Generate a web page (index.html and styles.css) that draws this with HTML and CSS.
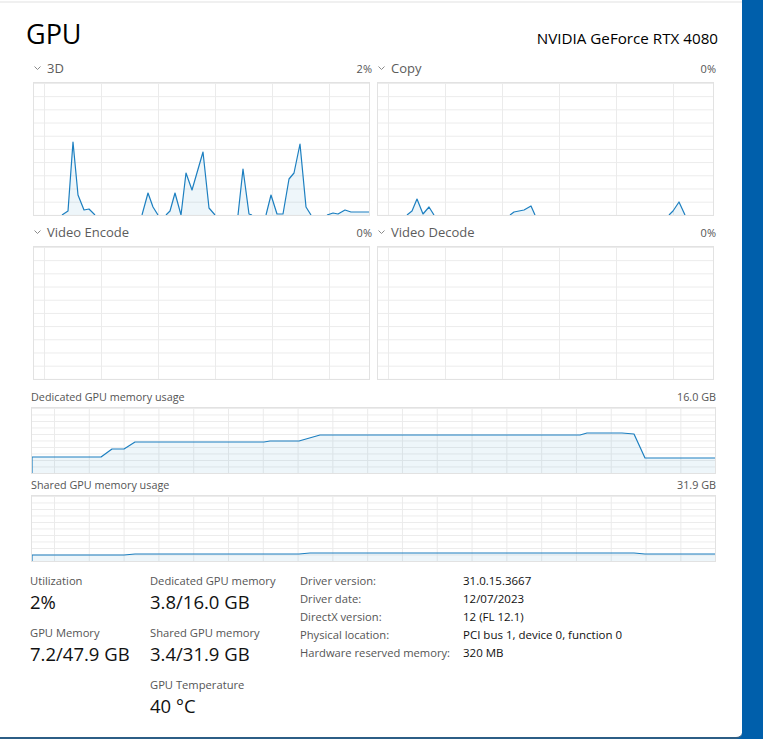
FILE: index.html
```html
<!DOCTYPE html>
<html lang="en">
<head>
    <meta charset="UTF-8">
    <meta name="viewport" content="width=device-width, initial-scale=1.0">
    <title>Task Manager - GPU</title>
    <link rel="stylesheet" href="styles.css">
</head>
<body>
    <div class="panel">
        <header class="head">
            <h1>GPU</h1>
            <div class="model">NVIDIA GeForce RTX 4080</div>
        </header>

        <div class="engines">
            <section class="engine">
                <div class="engine-head">
                    <span class="name"><svg class="chev" viewBox="0 0 7 4"><polyline points="0.5,0.5 3.5,3.5 6.5,0.5"/></svg>3D</span>
                    <span class="pct">2%</span>
                </div>
                <div class="graph">
                    <svg viewBox="0 0 335 132" preserveAspectRatio="none">
                        <polygon class="area" points="28,132 34,128 39,59 44,112 50,127 55,126 61,132 108,132 114,110 119,124 124,132 132,132 136,128 141,110 147,132 152,90 158,107 169,69 175,125 181,132 204,132 209,86 215,131 218,132 232,132 237,112 243,131 249,131 255,96 260,90 266,61 272,124 277,132 293,132 299,130 304,131 311,127 317,129 335,129 335,132"/>
                        <polyline class="line" points="28,132 34,128 39,59 44,112 50,127 55,126 61,132"/>
                        <polyline class="line" points="108,132 114,110 119,124 124,132"/>
                        <polyline class="line" points="132,132 136,128 141,110 147,132 152,90 158,107 169,69 175,125 181,132"/>
                        <polyline class="line" points="204,132 209,86 215,131 218,132"/>
                        <polyline class="line" points="232,132 237,112 243,131 249,131 255,96 260,90 266,61 272,124 277,132"/>
                        <polyline class="line" points="293,132 299,130 304,131 311,127 317,129 335,129"/>
                    </svg>
                </div>
            </section>
            <section class="engine">
                <div class="engine-head">
                    <span class="name"><svg class="chev" viewBox="0 0 7 4"><polyline points="0.5,0.5 3.5,3.5 6.5,0.5"/></svg>Copy</span>
                    <span class="pct">0%</span>
                </div>
                <div class="graph">
                    <svg viewBox="0 0 335 132" preserveAspectRatio="none">
                        <polygon class="area" points="29,132 34,128 39,116 45,131 51,124 56,132"/>
                        <polygon class="area" points="132,132 136,129 146,127 153,123 157,132"/>
                        <polygon class="area" points="291,132 295,128 301,119 307,132"/>
                        <polyline class="line" points="29,132 34,128 39,116 45,131 51,124 56,132"/>
                        <polyline class="line" points="132,132 136,129 146,127 153,123 157,132"/>
                        <polyline class="line" points="291,132 295,128 301,119 307,132"/>
                    </svg>
                </div>
            </section>
            <section class="engine">
                <div class="engine-head">
                    <span class="name"><svg class="chev" viewBox="0 0 7 4"><polyline points="0.5,0.5 3.5,3.5 6.5,0.5"/></svg>Video Encode</span>
                    <span class="pct">0%</span>
                </div>
                <div class="graph"></div>
            </section>
            <section class="engine">
                <div class="engine-head">
                    <span class="name"><svg class="chev" viewBox="0 0 7 4"><polyline points="0.5,0.5 3.5,3.5 6.5,0.5"/></svg>Video Decode</span>
                    <span class="pct">0%</span>
                </div>
                <div class="graph"></div>
            </section>
        </div>

        <section class="mem">
            <div class="mem-head">
                <span>Dedicated GPU memory usage</span>
                <span>16.0 GB</span>
            </div>
            <div class="graph mem-graph">
                <svg viewBox="0 0 683 65" preserveAspectRatio="none">
                    <polygon class="area" points="0,65 0,49 69,49 80,41 92,41 103,34 232,34 238,33 267,33 288,27 312,27 548,27 555,25 590,25 602,26 613,50 683,50 683,65"/>
                    <polyline class="line" points="0,65 0,49 69,49 80,41 92,41 103,34 232,34 238,33 267,33 288,27 312,27 548,27 555,25 590,25 602,26 613,50 683,50"/>
                </svg>
            </div>
        </section>

        <section class="mem shared">
            <div class="mem-head">
                <span>Shared GPU memory usage</span>
                <span>31.9 GB</span>
            </div>
            <div class="graph mem-graph">
                <svg viewBox="0 0 683 65" preserveAspectRatio="none">
                    <polygon class="area" points="0,65 0,59 92,59 103,58 267,58 278,57 602,57 613,58 683,58 683,65"/>
                    <polyline class="line" points="0,65 0,59 92,59 103,58 267,58 278,57 602,57 613,58 683,58"/>
                </svg>
            </div>
        </section>

        <div class="stats">
            <div class="col col-1">
                <div class="stat">
                    <div class="label">Utilization</div>
                    <div class="value">2%</div>
                </div>
                <div class="stat">
                    <div class="label">GPU Memory</div>
                    <div class="value">7.2/47.9 GB</div>
                </div>
            </div>
            <div class="col col-2">
                <div class="stat">
                    <div class="label">Dedicated GPU memory</div>
                    <div class="value">3.8/16.0 GB</div>
                </div>
                <div class="stat">
                    <div class="label">Shared GPU memory</div>
                    <div class="value">3.4/31.9 GB</div>
                </div>
                <div class="stat">
                    <div class="label">GPU Temperature</div>
                    <div class="value">40 °C</div>
                </div>
            </div>
            <dl class="info">
                <dt>Driver version:</dt><dd>31.0.15.3667</dd>
                <dt>Driver date:</dt><dd>12/07/2023</dd>
                <dt>DirectX version:</dt><dd>12 (FL 12.1)</dd>
                <dt>Physical location:</dt><dd>PCI bus 1, device 0, function 0</dd>
                <dt>Hardware reserved memory:</dt><dd>320 MB</dd>
            </dl>
        </div>
    </div>
</body>
</html>
```

FILE: styles.css
```css
html,
body {
    margin: 0;
    height: 100%;
}

body {
    background: #005fab; /* window accent strip on the right */
    font-family: "Open Sans", "Noto Sans", sans-serif;
    color: #1b1b1b;
    overflow: hidden;
}

.panel {
    box-sizing: border-box;
    width: 742px;
    height: 739px;
    background: #fff;
    border-bottom: 2px solid #2c5e86;
    border-bottom-right-radius: 6px;
    box-shadow: inset 0 1px #fff, inset 0 3px #f0f0f0; /* thin top rule */
}

/* header */
.head {
    display: flex;
    justify-content: space-between;
    align-items: baseline;
    padding: 16px 24px 0 26px;
    height: 41px;
}

.head h1 {
    margin: 0;
    font-size: 27px;
    font-weight: 400;
    line-height: 36px;
    color: #000;
}

.model {
    font-size: 15.2px;
    color: #000;
}

/* engine graphs */
.engines {
    display: grid;
    grid-template-columns: 337px 337px;
    column-gap: 7px;
    row-gap: 6px;
    margin: 1px 0 0 33px;
    width: 681px;
}

.engine-head {
    display: flex;
    justify-content: space-between;
    align-items: center;
    height: 20px;
    margin-bottom: 4px;
    font-size: 13px;
    color: #5c5c5c;
}

.engine-head .name {
    display: flex;
    align-items: center;
}

.chev {
    width: 7px;
    height: 4px;
    margin: 0 6px 0 1px;
    fill: none;
    stroke: #8a8a8a;
    stroke-width: 1;
}

.pct {
    font-size: 11px;
    margin-right: -2px;
    color: #555;
}

.graph {
    height: 132px;
    border: 1px solid #e2e2e2;
    background-color: #fff;
    background-image:
        linear-gradient(to right, #ebebeb 1px, transparent 1px),
        linear-gradient(to bottom, #ebebeb 1px, transparent 1px);
    background-size: 57px 100%, 100% 13.2px;
    background-position: 10px 0, 0 13.2px;
}

.graph svg {
    display: block;
    width: 100%;
    height: 100%;
}

.area {
    fill: rgba(17, 125, 187, 0.07);
    stroke: none;
}

.line {
    fill: none;
    stroke: #1c7fc0;
    stroke-width: 1.2;
    stroke-linejoin: round;
    vector-effect: non-scaling-stroke;
}

/* memory graphs */
.mem {
    margin: 9px 26px 0 31px;
}

.mem.shared {
    margin-top: 3px;
}

.mem-head {
    display: flex;
    justify-content: space-between;
    font-size: 10.8px;
    line-height: 16px;
    color: #555;
    margin-bottom: 2px;
}

.mem-graph {
    height: 65px;
    background-size: 34.8px 100%, 100% 6.5px;
    background-position: 22px 0, 0 6.5px;
}

/* numbers below */
.stats {
    display: flex;
    align-items: flex-start;
    margin-top: 11px;
    padding-left: 30px;
}

.col-1 {
    width: 120px;
}

.col-2 {
    width: 150px;
}

.stat {
    margin-bottom: 10px;
}

.label {
    font-size: 11.2px;
    line-height: 16px;
    color: #555;
}

.value {
    font-size: 18.5px;
    line-height: 26px;
    color: #111;
}

.info {
    display: grid;
    grid-template-columns: 163px auto;
    align-content: start;
    margin: -1px 0 0 0;
    font-size: 11.2px;
    line-height: 18px;
}

.info dt {
    color: #555;
}

.info dd {
    margin: 0;
    font-size: 11.5px;
    color: #111;
}
```
